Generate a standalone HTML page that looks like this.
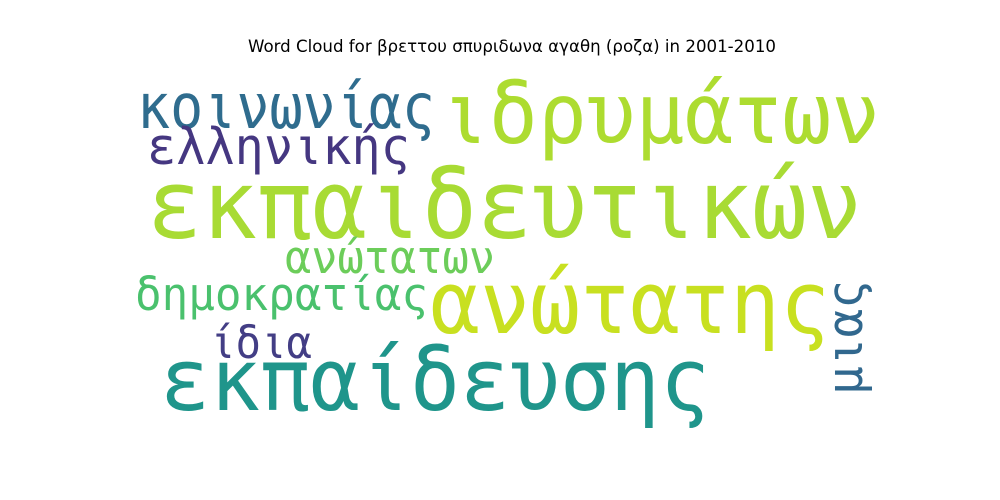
<!DOCTYPE html>
<html><head><meta charset="utf-8"><style>
html,body{margin:0;padding:0;background:#fff;width:1000px;height:500px;overflow:hidden}
svg{display:block}
text{font-family:"DejaVu Sans Mono","Liberation Mono",monospace}
.t{font-family:"DejaVu Sans","Liberation Sans",sans-serif;font-size:16.5px;fill:#000}
</style></head><body>
<svg width="1000" height="500" viewBox="0 0 1000 500" xmlns="http://www.w3.org/2000/svg">
<text class="t" x="512" y="52" text-anchor="middle" textLength="528" lengthAdjust="spacingAndGlyphs">Word Cloud for βρεττου σπυριδωνα αγαθη (ροζα) in 2001-2010</text>
<text x="137" y="128" font-size="62" fill="#2f6c8e" textLength="298" lengthAdjust="spacingAndGlyphs">κοινωνίας</text>
<text x="440" y="143" font-size="84" fill="#addc30" textLength="440" lengthAdjust="spacingAndGlyphs">ιδρυμάτων</text>
<text x="147" y="164" font-size="51" fill="#453781" textLength="263" lengthAdjust="spacingAndGlyphs">ελληνικής</text>
<text x="147" y="238" font-size="95" fill="#a8db34" textLength="715" lengthAdjust="spacingAndGlyphs">εκπαιδευτικών</text>
<text x="285" y="273" font-size="45" fill="#6ccd5a" textLength="210" lengthAdjust="spacingAndGlyphs">ανώτατων</text>
<text x="135" y="310" font-size="45" fill="#4ac16d" textLength="293" lengthAdjust="spacingAndGlyphs">δημοκρατίας</text>
<text x="430" y="333" font-size="86" fill="#c8e020" textLength="400" lengthAdjust="spacingAndGlyphs">ανώτατης</text>
<text x="210" y="358" font-size="44" fill="#433e85" textLength="102" lengthAdjust="spacingAndGlyphs">ίδια</text>
<text x="160" y="410" font-size="86" fill="#1f958b" textLength="550" lengthAdjust="spacingAndGlyphs">εκπαίδευσης</text>
<text transform="translate(862,395) rotate(-90)" x="0" y="0" font-size="49" fill="#31688e" textLength="115" lengthAdjust="spacingAndGlyphs">μιας</text>
</svg>
</body></html>
